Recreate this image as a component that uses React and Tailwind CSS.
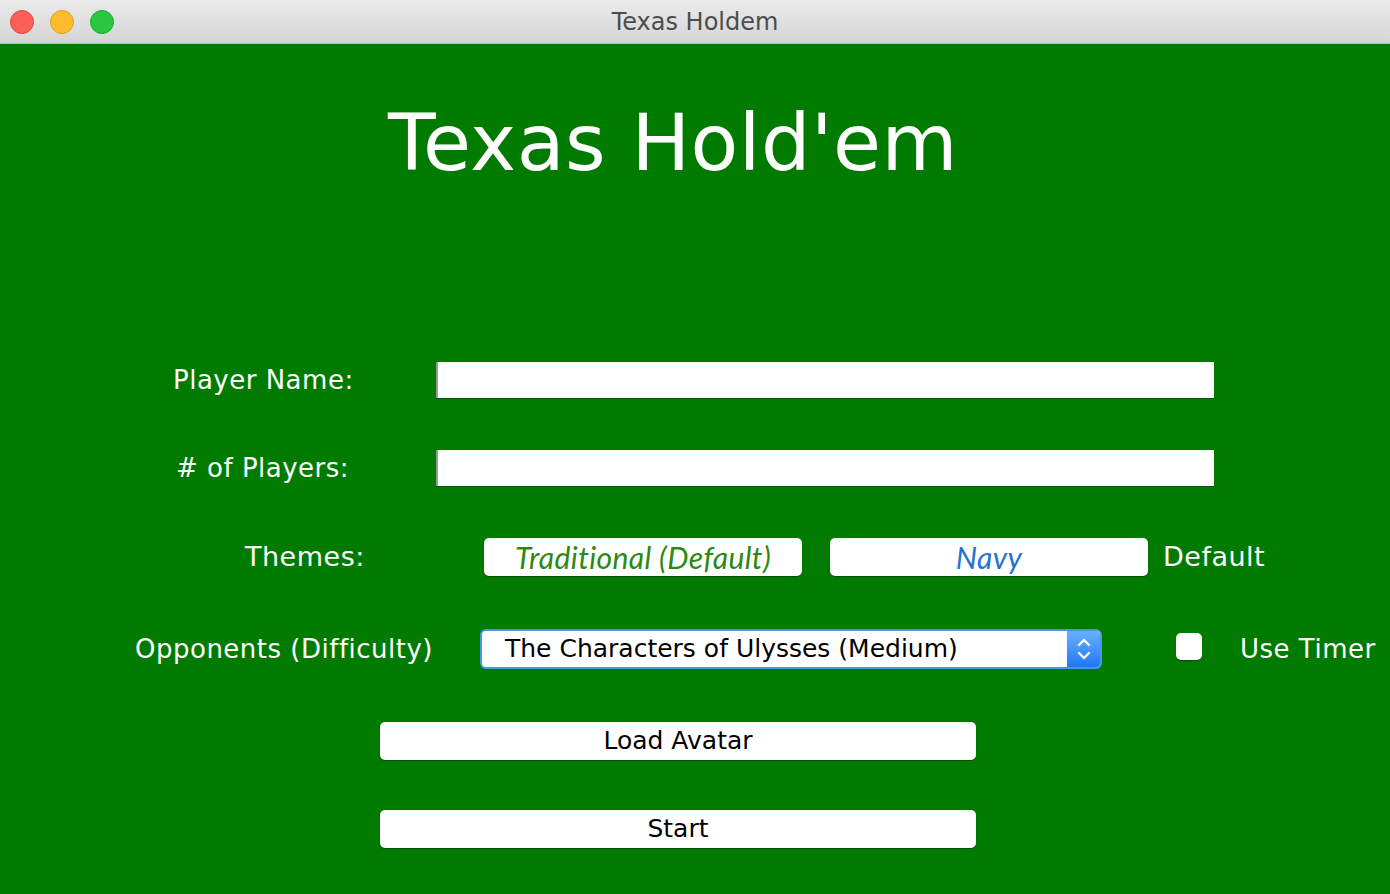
import React from "react";

const lucida = { fontFamily: "'DejaVu Sans', 'Liberation Sans', sans-serif" };

function TitleBar() {
  return (
    <div className="relative h-[44px] flex items-center border-b border-[#b9b9b9] bg-gradient-to-b from-[#ebebeb] to-[#d5d5d5]">
      <div className="flex items-center gap-[16px] pl-[10px]">
        <span className="w-[24px] h-[24px] rounded-full bg-[#fe5f57] border border-[#e0443e]" />
        <span className="w-[24px] h-[24px] rounded-full bg-[#febc2e] border border-[#dea123]" />
        <span className="w-[24px] h-[24px] rounded-full bg-[#29c840] border border-[#1aab29]" />
      </div>
      <div
        className="absolute inset-0 flex items-center justify-center text-[24px] text-[#4d4d4d]"
        style={lucida}
      >
        Texas Holdem
      </div>
    </div>
  );
}

function Label({ children, className }) {
  return (
    <span className={`text-white text-[26px] tracking-[0.5px] ${className}`} style={lucida}>
      {children}
    </span>
  );
}

function TextField() {
  return <div className="w-[778px] h-[36px] bg-white border-l-2 border-[#9a9a9a] shadow-[0_1px_0_#0b5a0b]" />;
}

function ThemeButton({ children, color }) {
  return (
    <button
      className={`w-[318px] h-[38px] rounded-[5px] bg-white shadow-[0_1px_1px_rgba(0,0,0,0.35)] text-[30px] leading-none tracking-[0.4px] italic ${color}`}
      style={{ fontFamily: "'Lato', 'Open Sans', sans-serif" }}
    >
      {children}
    </button>
  );
}

function WideButton({ children }) {
  return (
    <button
      className="w-[596px] h-[38px] rounded-[5px] bg-white shadow-[0_1px_1px_rgba(0,0,0,0.35)] text-black text-[25px]"
      style={lucida}
    >
      {children}
    </button>
  );
}

export default function App() {
  return (
    <div className="w-[1390px] h-[894px] flex flex-col bg-[#007b00] overflow-hidden">
      <TitleBar />

      {/* Heading */}
      <div className="pl-[388px] pt-[60px] h-[310px]">
        <h1 className="text-white text-[78px] leading-none tracking-[0.5px]" style={lucida}>
          Texas Hold'em
        </h1>
      </div>

      {/* Player name */}
      <div className="flex items-center h-[36px] mt-[8px]">
        <Label className="w-[436px] pl-[173px] shrink-0 whitespace-nowrap">Player Name:</Label>
        <TextField />
      </div>

      {/* Players count */}
      <div className="flex items-center h-[36px] mt-[52px]">
        <Label className="w-[436px] pl-[176px] shrink-0 whitespace-nowrap"># of Players:</Label>
        <TextField />
      </div>

      {/* Themes */}
      <div className="flex items-center h-[38px] mt-[52px]">
        <Label className="w-[484px] pl-[245px] shrink-0 whitespace-nowrap text-[27px]">Themes:</Label>
        <ThemeButton color="text-[#2a8a12]">Traditional (Default)</ThemeButton>
        <div className="w-[28px]" />
        <ThemeButton color="text-[#2672d2]">Navy</ThemeButton>
        <Label className="ml-[15px] text-[27px]">Default</Label>
      </div>

      {/* Opponents */}
      <div className="flex items-center h-[40px] mt-[53px]">
        <Label className="w-[480px] pl-[135px] shrink-0 whitespace-nowrap">Opponents (Difficulty)</Label>
        <div className="w-[622px] h-[40px] flex rounded-[6px] border-2 border-[#4b95e6] bg-white overflow-hidden">
          <div className="flex-1 flex items-center pl-[23px] text-[25px] text-black" style={lucida}>
            The Characters of Ulysses (Medium)
          </div>
          <div className="w-[33px] flex flex-col items-center justify-center bg-gradient-to-b from-[#68b0ff] to-[#1a79f4]">
            <svg width="14" height="26" viewBox="0 0 14 26" fill="none" stroke="white" strokeWidth="2.4" strokeLinecap="round" strokeLinejoin="round">
              <path d="M2 9 L7 4 L12 9" />
              <path d="M2 17 L7 22 L12 17" />
            </svg>
          </div>
        </div>
        <div className="ml-[74px] mb-[6px] w-[26px] h-[27px] rounded-[5px] bg-white shadow-[0_1px_1px_rgba(0,0,0,0.35)]" />
        <Label className="ml-[38px] whitespace-nowrap">Use Timer</Label>
      </div>

      {/* Load avatar / start */}
      <div className="flex flex-col pl-[380px] mt-[53px] gap-[50px]">
        <WideButton>Load Avatar</WideButton>
        <WideButton>Start</WideButton>
      </div>
    </div>
  );
}
